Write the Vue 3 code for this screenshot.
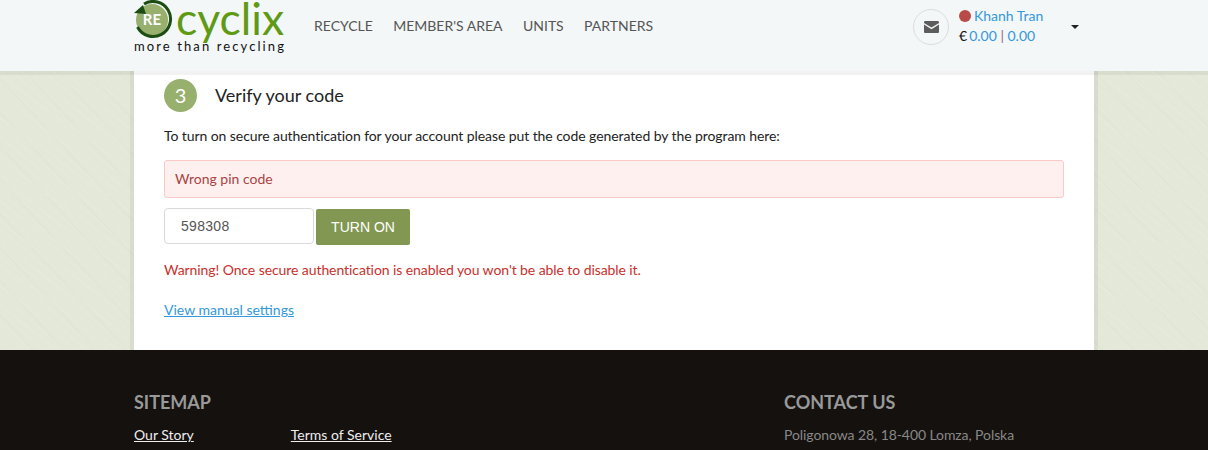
<script setup>
import { ref } from "vue";

const navItems = ["RECYCLE", "MEMBER'S AREA", "UNITS", "PARTNERS"];
const pin = ref("598308");
</script>

<template>
  <div class="page">
    <header class="header">
      <div class="header-inner">
        <div class="logo">
          <div class="logo-top">
            <div class="logo-mark">
              <svg width="40" height="43" viewBox="0 0 40 43">
                <circle cx="18" cy="23" r="16" fill="#97b06e" />
                <path d="M10 7 A17.5 17.5 0 1 1 3.5 30" fill="none" stroke="#1d4d12" stroke-width="3" />
                <path d="M0 16 L9 8 L12 17 Z" fill="#1d4d12" />
              </svg>
              <span class="logo-re">RE</span>
            </div>
            <span class="logo-name">cyclix</span>
          </div>
          <div class="logo-tag">more than recycling</div>
        </div>
        <nav class="nav">
          <a v-for="item in navItems" :key="item" class="nav-item">{{ item }}</a>
        </nav>
        <div class="user">
          <div class="mail">
            <svg width="15" height="12" viewBox="0 0 15 12">
              <path d="M1.3 0H13.7C14.4 0 15 .6 15 1.3V2L7.5 6.6 0 2V1.3C0 .6.6 0 1.3 0Z" fill="#5c5c5c" />
              <path d="M0 3.6L7.5 8.2 15 3.6V10.7C15 11.4 14.4 12 13.7 12H1.3C.6 12 0 11.4 0 10.7Z" fill="#5c5c5c" />
            </svg>
          </div>
          <div class="user-info">
            <div class="user-name"><span class="dot"></span>Khanh Tran</div>
            <div class="user-balance"><span class="euro">€</span>0.00 <span class="sep">|</span> 0.00</div>
          </div>
          <span class="caret"></span>
        </div>
      </div>
    </header>

    <main class="main">
      <section class="card">
        <div class="step">
          <span class="step-num">3</span>
          <h2 class="step-title">Verify your code</h2>
        </div>
        <p class="intro">To turn on secure authentication for your account please put the code generated by the program here:</p>
        <div class="alert">Wrong pin code</div>
        <form class="pin-form" @submit.prevent>
          <input v-model="pin" class="pin-input" type="text" />
          <button class="pin-btn" type="submit">TURN ON</button>
        </form>
        <p class="warning">Warning! Once secure authentication is enabled you won't be able to disable it.</p>
        <a class="manual">View manual settings</a>
      </section>
    </main>

    <footer class="footer">
      <div class="footer-inner">
        <div class="sitemap">
          <h3 class="footer-title">SITEMAP</h3>
          <div class="links">
            <a class="footer-link">Our Story</a>
            <a class="footer-link">Terms of Service</a>
          </div>
        </div>
        <div class="contact">
          <h3 class="footer-title">CONTACT US</h3>
          <div class="address">Poligonowa 28, 18-400 Lomza, Polska</div>
        </div>
      </div>
    </footer>
  </div>
</template>

<style>
html,
body {
  margin: 0;
  overflow: hidden;
}
</style>

<style scoped>
.page {
  height: 450px;
  overflow: hidden;
  font-family: Lato, "Liberation Sans", sans-serif;
  font-size: 14px;
  color: #222;
}

.header {
  position: relative;
  z-index: 2;
  height: 71px;
  background: #f3f7f8;
  box-shadow: 0 4px 0 rgba(0, 0, 0, 0.05);
}

.header-inner {
  width: 960px;
  height: 71px;
  margin-left: 134px;
  display: flex;
}

.logo {
  width: 180px;
  height: 71px;
}

.logo-top {
  display: flex;
  height: 38px;
}

.logo-mark {
  position: relative;
  width: 40px;
  height: 43px;
  margin-top: -3px;
  overflow: hidden;
}

.logo-re {
  position: absolute;
  left: 7px;
  top: 14px;
  width: 22px;
  text-align: center;
  font-size: 15px;
  font-weight: 700;
  line-height: 16px;
  color: #fff;
}

.logo-name {
  margin-left: 2px;
  font-size: 44.5px;
  line-height: 36px;
  color: #5f9a14;
}

.logo-tag {
  font-size: 13px;
  line-height: 16px;
  letter-spacing: 2.1px;
  white-space: nowrap;
  color: #111;
}

.nav {
  display: flex;
  gap: 20.4px;
  height: 51px;
  align-items: center;
}

.nav-item {
  font-size: 14px;
  color: #555;
}

.user {
  display: flex;
  margin-left: auto;
  width: 181px;
  padding-top: 9px;
  box-sizing: border-box;
}

.mail {
  width: 36px;
  height: 36px;
  box-sizing: border-box;
  border: 1px solid #dcdcdc;
  border-radius: 50%;
  display: flex;
  align-items: center;
  justify-content: center;
}

.user-info {
  margin-left: 10px;
  line-height: 20px;
  color: #3498db;
  margin-top: -3px;
}

.user-name {
  display: flex;
  align-items: center;
}

.dot {
  width: 12px;
  height: 12px;
  margin-right: 3px;
  border-radius: 50%;
  background: #b94a48;
}

.euro {
  margin-right: 2px;
  color: #111;
}

.sep {
  color: #8a6d7b;
}

.caret {
  margin: 16px 15px 0 auto;
  width: 0;
  height: 0;
  border-left: 4px solid transparent;
  border-right: 4px solid transparent;
  border-top: 4px solid #222;
}

.main {
  height: 279px;
  background-color: #e3e8d8;
  background-image:
    repeating-linear-gradient(41deg, rgba(255, 255, 255, 0.07) 0 1px, transparent 1px 7px),
    repeating-linear-gradient(36deg, rgba(255, 255, 255, 0.06) 0 2px, transparent 2px 17px),
    repeating-linear-gradient(47deg, rgba(120, 130, 100, 0.02) 0 2px, transparent 2px 23px);
}

.card {
  width: 960px;
  height: 279px;
  margin-left: 134px;
  padding: 8px 30px 0;
  box-sizing: border-box;
  background: #fff;
  box-shadow: 0 0 0 4px rgba(0, 0, 0, 0.05);
}

.step {
  display: flex;
  align-items: center;
  height: 33px;
}

.step-num {
  width: 33px;
  height: 33px;
  border-radius: 50%;
  background: #97b06e;
  color: #fff;
  font-size: 20px;
  line-height: 33px;
  text-align: center;
}

.step-title {
  margin: 0 0 2px 18px;
  font-size: 18px;
  font-weight: 400;
  color: #222;
}

.intro {
  margin: 15px 0 0;
  line-height: 18px;
  letter-spacing: -0.08px;
  color: #222;
}

.alert {
  margin-top: 15px;
  height: 38px;
  box-sizing: border-box;
  padding: 0 10px;
  line-height: 36px;
  background: #fff0f0;
  border: 1px solid #fcc8c8;
  border-radius: 3px;
  color: #a94442;
}

.pin-form {
  display: flex;
  align-items: flex-start;
  gap: 2px;
  margin-top: 10px;
}

.pin-input {
  width: 150px;
  height: 36px;
  box-sizing: border-box;
  padding: 0 16px;
  border: 1px solid #d9d9d9;
  border-radius: 4px;
  background: #fff;
  font-family: "Liberation Sans", sans-serif;
  font-size: 14px;
  letter-spacing: 0.3px;
  color: #555;
  outline: none;
}

.pin-btn {
  width: 94px;
  height: 36px;
  margin-top: 1px;
  padding: 0;
  border: none;
  border-radius: 2px;
  background: #819752;
  font-family: "Liberation Sans", sans-serif;
  font-size: 14px;
  color: #fff;
}

.warning {
  margin: 16px 0 0;
  line-height: 18px;
  letter-spacing: -0.08px;
  color: #c9302c;
}

.manual {
  display: block;
  margin-top: 22px;
  line-height: 18px;
  color: #3498db;
  text-decoration: underline;
}

.footer {
  height: 100px;
  background: #15110e;
}

.footer-inner {
  width: 960px;
  margin-left: 134px;
  padding-top: 41px;
  display: flex;
}

.sitemap {
  width: 650px;
}

.footer-title {
  margin: 0;
  font-size: 18px;
  font-weight: 700;
  line-height: 22px;
  color: #999;
}

.links {
  display: flex;
  gap: 97px;
  margin-top: 13px;
  line-height: 18px;
}

.footer-link {
  color: #eee;
  text-decoration: underline;
}

.address {
  margin-top: 13px;
  line-height: 18px;
  letter-spacing: -0.08px;
  color: #888;
}
</style>
